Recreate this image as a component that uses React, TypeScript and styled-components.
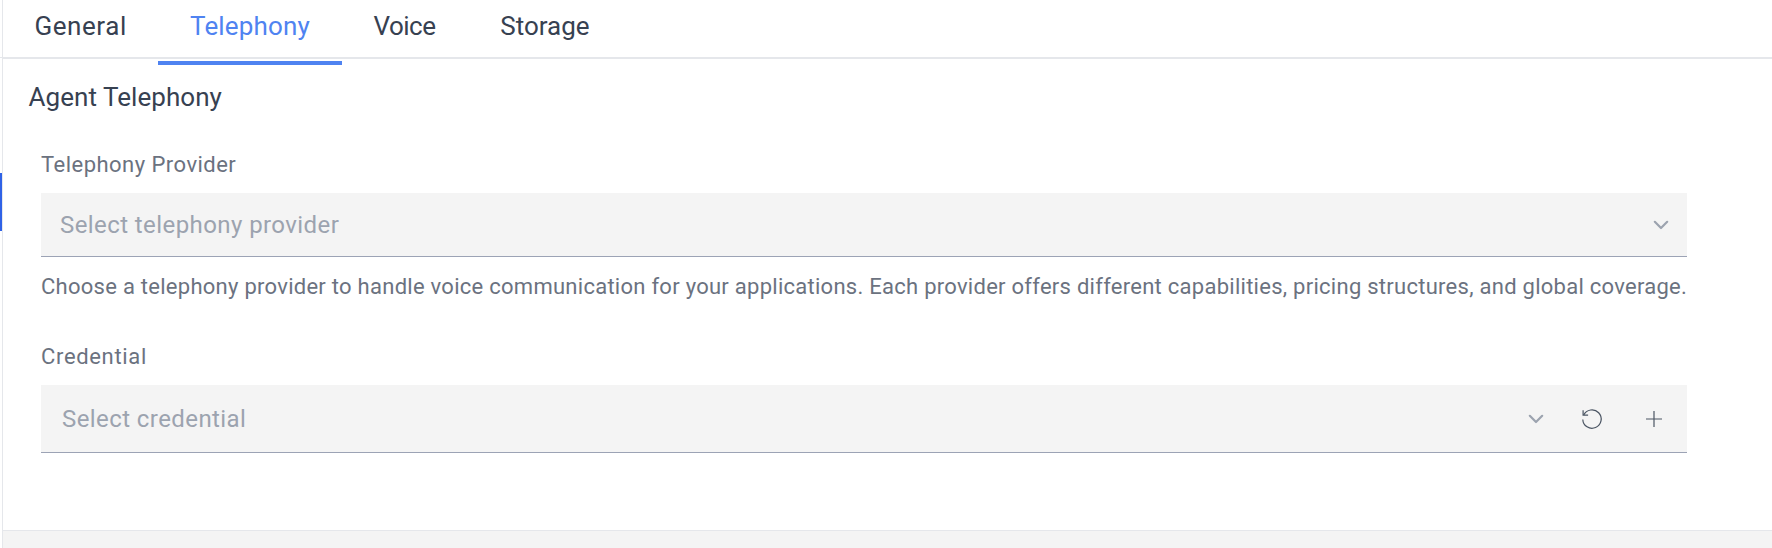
import React from "react";
import styled, { createGlobalStyle } from "styled-components";

const GlobalStyle = createGlobalStyle`
  * { box-sizing: border-box; }
  body {
    margin: 0;
    background: #fff;
    font-family: Roboto, "Noto Sans", sans-serif;
    overflow: hidden;
  }
`;

const Screen = styled.div`
  display: flex;
  width: 100%;
  height: 548px;
`;

const Rail = styled.div`
  flex: 0 0 2px;
  display: flex;
  flex-direction: column;
  padding-top: 57px;
`;

const RailLine = styled.div`
  height: 1px;
  background: #e5e7eb;
`;

const RailMarker = styled.div`
  height: 58px;
  margin-top: 115px;
  background: #2f62e6;
`;

const Panel = styled.main`
  flex: 1;
  min-width: 0;
  display: flex;
  flex-direction: column;
  border-left: 1px solid #e5e7eb;
`;

const Tabs = styled.nav`
  display: flex;
  flex: 0 0 59px;
  border-bottom: 2px solid #e5e7eb;
`;

const Tab = styled.button<{ $active?: boolean; $width: number; $spacing?: number; $start?: number }>`
  position: relative;
  width: ${(p) => p.$width}px;
  height: 57px;
  padding: 0 0 5px ${(p) => p.$start ?? 32}px;
  border: 0;
  background: none;
  text-align: left;
  white-space: nowrap;
  font: 400 26px/52px Roboto, sans-serif;
  letter-spacing: ${(p) => p.$spacing ?? 0}px;
  color: ${(p) => (p.$active ? "#4f83f1" : "#374151")};

  &::after {
    content: "";
    display: ${(p) => (p.$active ? "block" : "none")};
    position: absolute;
    left: 0;
    right: 0;
    bottom: -8px;
    height: 4px;
    background: #4f83f1;
  }
`;

const Content = styled.section`
  flex: 1;
  padding: 22px 85px 0 26px;
`;

const Heading = styled.h2`
  margin: 0 0 38px -0.5px;
  font-size: 26px;
  line-height: 32px;
  font-weight: 400;
  letter-spacing: 0.05px;
  color: #374151;
`;

const Field = styled.div`
  display: flex;
  flex-direction: column;
  margin: 0 0 42px 12px;
`;

const Label = styled.label<{ $spacing: number }>`
  margin-bottom: 14px;
  font-size: 22px;
  line-height: 28px;
  letter-spacing: ${(p) => p.$spacing}px;
  color: #6b7280;
`;

const Select = styled.div<{ $height: number; $start: number; $end: number }>`
  display: flex;
  align-items: center;
  height: ${(p) => p.$height}px;
  padding: 0 ${(p) => p.$end}px 0 ${(p) => p.$start}px;
  background: #f4f4f4;
  border-bottom: 1px solid #9ca3b5;
`;

const Placeholder = styled.span`
  flex: 1;
  font-size: 24px;
  line-height: 32px;
  letter-spacing: 0.42px;
  color: #9ca3af;
`;

const Helper = styled.p`
  margin: 16px 0 0;
  font-size: 22px;
  line-height: 28px;
  letter-spacing: 0.268px;
  white-space: nowrap;
  color: #6b7280;
`;

const Actions = styled.div`
  display: grid;
  grid-template-columns: 20px 24px 28px;
  align-items: center;
  column-gap: 34px;

  > :last-child {
    justify-self: end;
  }
`;

const Icon = styled.svg`
  display: block;
  flex: none;
  fill: none;
`;

const Footer = styled.footer`
  flex: 0 0 18px;
  border-top: 1px solid #e5e7eb;
  background: #f4f4f4;
`;

const Chevron = () => (
  <Icon width="20" height="20" viewBox="0 0 20 20" stroke="#9ca3af" strokeWidth="2.2" strokeLinecap="round" strokeLinejoin="round">
    <path d="M3.8 6.8 10 13 16.2 6.8" />
  </Icon>
);

const Reset = () => (
  <Icon width="24" height="24" viewBox="0 0 24 24" stroke="#4b5563" strokeWidth="1.2">
    <path d="M2.8 12.4A9.2 9.2 0 1 0 3.7 8.1" />
    <path d="M3.1 3.2V8.2H8.1" />
  </Icon>
);

const Plus = () => (
  <Icon width="24" height="24" viewBox="0 0 24 24" stroke="#4b5563" strokeWidth="1.2">
    <path d="M12 4V20M4 12H20" />
  </Icon>
);

export default function App() {
  return (
    <Screen>
      <GlobalStyle />
      <Rail>
        <RailLine />
        <RailMarker />
      </Rail>
      <Panel>
        <Tabs>
          <Tab $width={155} $start={31.5} $spacing={0.55}>General</Tab>
          <Tab $width={184} $spacing={0.155} $active>Telephony</Tab>
          <Tab $width={126} $start={31.5} $spacing={-0.5}>Voice</Tab>
          <Tab $width={153} $start={32.3}>Storage</Tab>
        </Tabs>
        <Content>
          <Heading>Agent Telephony</Heading>
          <Field>
            <Label $spacing={0.47}>Telephony Provider</Label>
            <Select $height={64} $start={19} $end={16}>
              <Placeholder>Select telephony provider</Placeholder>
              <Chevron />
            </Select>
            <Helper>
              Choose a telephony provider to handle voice communication for your applications. Each provider offers different capabilities, pricing structures, and global coverage.
            </Helper>
          </Field>
          <Field>
            <Label $spacing={0.66}>Credential</Label>
            <Select $height={68} $start={21} $end={21}>
              <Placeholder>Select credential</Placeholder>
              <Actions>
                <Chevron />
                <Reset />
                <Plus />
              </Actions>
            </Select>
          </Field>
        </Content>
        <Footer />
      </Panel>
    </Screen>
  );
}
